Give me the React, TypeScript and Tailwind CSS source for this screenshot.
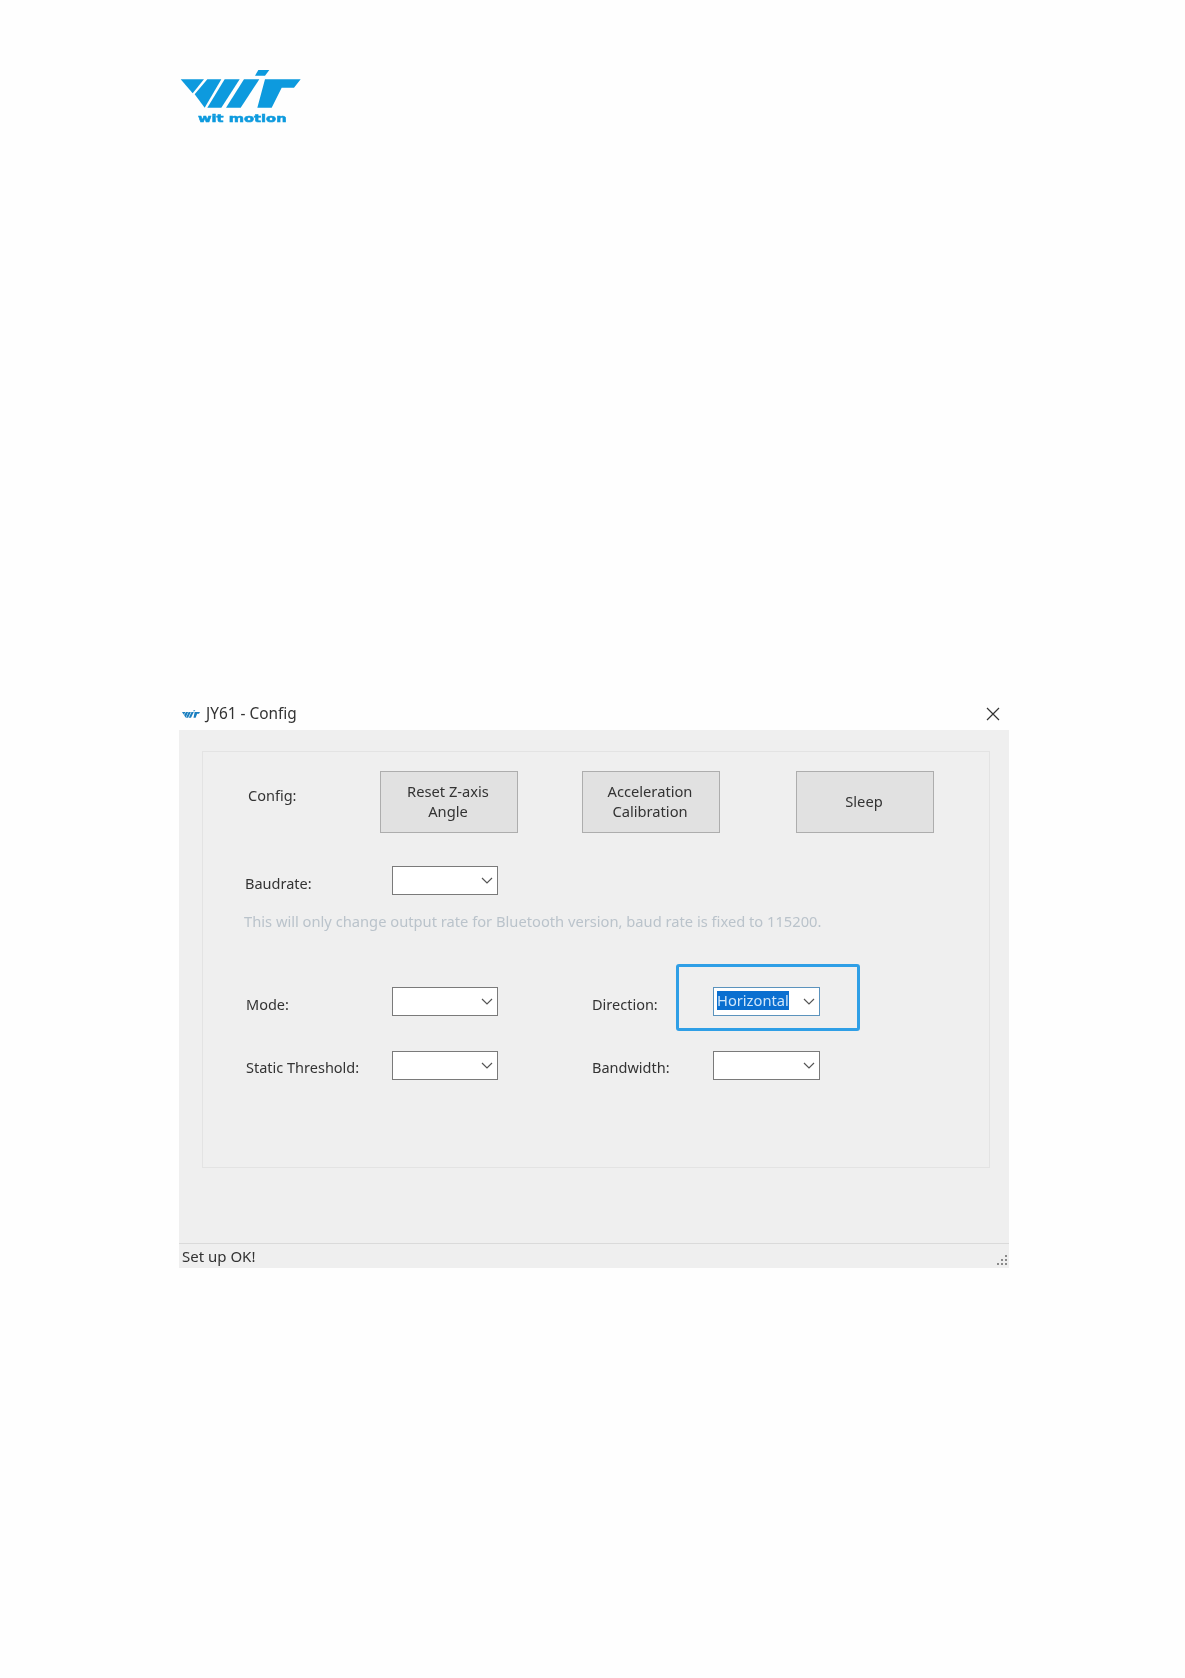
import React from "react";

const font = "[font-family:'Noto_Sans','Liberation_Sans',sans-serif]";

function Chevron() {
  return (
    <svg width="12" height="7" viewBox="0 0 12 7" className="shrink-0">
      <path d="M1 1 L6 6 L11 1" fill="none" stroke="#555" strokeWidth="1.2" />
    </svg>
  );
}

function Combo({ className = "" }: { className?: string }) {
  return (
    <div className={`flex h-[29px] w-[106px] shrink-0 items-center justify-end border border-[#7a7a7a] bg-white pr-[4px] ${className}`}>
      <Chevron />
    </div>
  );
}

function Label({ children, className = "" }: { children: React.ReactNode; className?: string }) {
  return <div className={`shrink-0 text-[14.5px] leading-[20px] text-[#333] ${className}`}>{children}</div>;
}

function Btn({ children, className = "" }: { children: React.ReactNode; className?: string }) {
  return (
    <div className={`flex h-[62px] w-[138px] shrink-0 items-center justify-center border border-[#adadad] bg-[#e1e1e1] pb-[3px] pr-[2px] text-center text-[14.7px] leading-[20px] text-[#333] ${className}`}>
      <div>{children}</div>
    </div>
  );
}

function Marks() {
  return (
    <>
      <polygon points="32,58 102,58 68,100" />
      <polygon points="112,58 154,58 104,143 74,103" />
      <polygon points="164,58 209,58 154,143 112,143" />
      <polygon points="222,58 268,58 212,143 168,143" />
      <polygon points="255,47 265,30 298,30 285,47" />
      <polygon points="285,58 392,58 372,83 335,83 305,143 262,143" />
    </>
  );
}

function Logo() {
  return (
    <svg width="140" height="70" viewBox="0 0 420 210" className="block">
      <g fill="#0d9ade">
        <Marks />
      </g>
      <text
        x="84"
        y="186"
        fontFamily="DejaVu Sans"
        fontWeight="700"
        fontSize="33"
        textLength="266"
        lengthAdjust="spacingAndGlyphs"
        fill="#0d9ade"
        stroke="#0d9ade"
        strokeWidth="1.5"
      >
        wit motion
      </text>
    </svg>
  );
}

export default function App() {
  return (
    <div className={`h-[1678px] w-[1185px] overflow-hidden bg-[#fefefe] ${font} [filter:blur(0.35px)]`}>
      <div className="ml-[170px] pt-[60px]">
        <Logo />
      </div>

      <div className="ml-[179px] mt-[570px] flex h-[30px] w-[830px] items-center pb-[3px] pl-[3px]">
        <svg width="18" height="8" viewBox="32 28 360 120" preserveAspectRatio="none" className="shrink-0">
          <g fill="#1a7fc0">
            <Marks />
          </g>
        </svg>
        <div className="ml-[6px] text-[15.4px] leading-[20px] text-[#333]">JY61 - Config</div>
        <svg width="14" height="14" viewBox="0 0 14 14" className="ml-auto mr-[9px] shrink-0">
          <path d="M1 1 L13 13 M13 1 L1 13" stroke="#333" strokeWidth="1.2" />
        </svg>
      </div>

      <div className="ml-[179px] flex h-[538px] w-[830px] flex-col bg-[#efefef] pt-[21px]">
        <div className="ml-[23px] h-[417px] w-[788px] border border-[#e3e3e3] pt-[19px]">
          <div className="flex items-center">
            <Label className="mb-[14px] ml-[45px] w-[132px]">Config:</Label>
            <Btn>
              Reset Z-axis
              <br />
              Angle
            </Btn>
            <Btn className="ml-[64px]">
              Acceleration
              <br />
              Calibration
            </Btn>
            <Btn className="ml-[76px]">Sleep</Btn>
          </div>

          <div className="mt-[33px] flex items-center pl-[42px]">
            <Label className="mt-[4px] w-[147px]">Baudrate:</Label>
            <Combo />
          </div>

          <div className="mt-[16px] pl-[41px] text-[14.7px] leading-[20px] text-[#bac3cb]">
            This will only change output rate for Bluetooth version, baud rate is fixed to 115200.
          </div>

          <div className="mt-[56px] flex items-center pl-[43px]">
            <Label className="mt-[5px] w-[146px]">Mode:</Label>
            <Combo />
            <Label className="ml-[94px] mt-[5px] w-[121px]">Direction:</Label>
            <div className="relative">
              <div className="flex h-[29px] w-[107px] items-center justify-between border border-[#5b93bd] bg-white pl-[3px] pr-[4px]">
                <div className="mb-[2px] flex h-[19px] w-[72px] items-center bg-[#0a6fd0] text-[14.7px] leading-[19px] text-[#cfe6fa]">Horizontal</div>
                <Chevron />
              </div>
              <div className="absolute -left-[37px] -top-[23px] h-[67px] w-[184px] rounded-[3px] border-[3px] border-[#2f9fe6]" />
            </div>
          </div>

          <div className="mt-[35px] flex items-center pl-[43px]">
            <Label className="mt-[3px] w-[146px]">Static Threshold:</Label>
            <Combo />
            <Label className="ml-[94px] mt-[3px] w-[121px]">Bandwidth:</Label>
            <Combo className="w-[107px]" />
          </div>
        </div>

        <div className="mt-auto flex h-[25px] items-center justify-between border-t border-[#dadada] pl-[3px]">
          <div className="text-[15px] leading-[20px] text-[#333]">Set up OK!</div>
          <svg width="14" height="14" viewBox="0 0 14 14" className="mt-[8px] shrink-0">
            <g fill="#8a8a8a">
              <rect x="10" y="2" width="2" height="2" />
              <rect x="6" y="6" width="2" height="2" />
              <rect x="10" y="6" width="2" height="2" />
              <rect x="2" y="10" width="2" height="2" />
              <rect x="6" y="10" width="2" height="2" />
              <rect x="10" y="10" width="2" height="2" />
            </g>
          </svg>
        </div>
      </div>
    </div>
  );
}
